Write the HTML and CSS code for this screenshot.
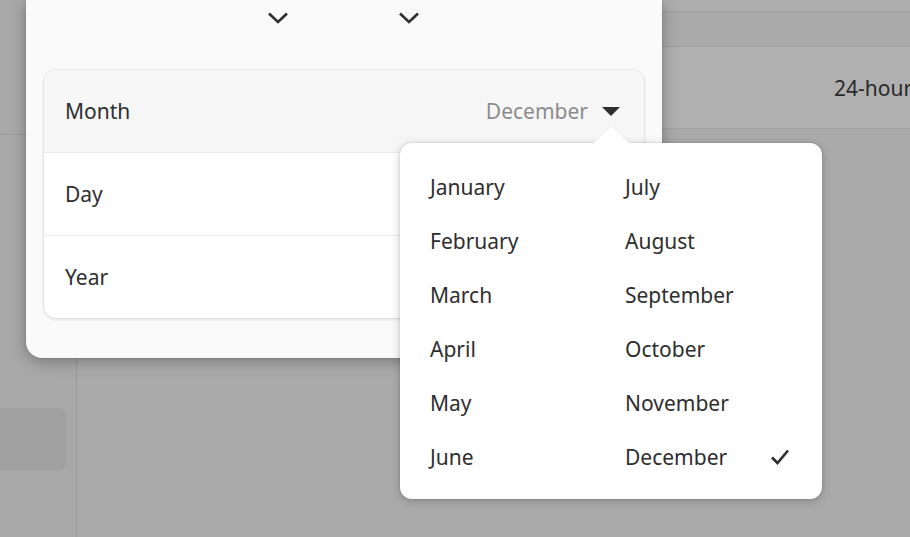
FILE: index.html
```html
<!DOCTYPE html>
<html lang="en">
<head>
<meta charset="utf-8">
<title>Date</title>
<link rel="stylesheet" href="styles.css">
</head>
<body>
<div class="screen">
  <aside class="sidebar">
    <div class="sb-header"></div>
    <div class="sb-item"></div>
  </aside>
  <main class="main">
    <div class="m-head"></div>
    <div class="m-gap"></div>
    <div class="m-row"><span class="m-label">24-hour</span></div>
  </main>

  <div class="dialog">
    <div class="spin-row">
      <button class="spin-btn" aria-label="Decrease">
        <svg width="22" height="14" viewBox="0 0 22 14"><polyline points="2,2.5 11,11 20,2.5" fill="none" stroke="#2e2e2e" stroke-width="2.6" stroke-linecap="butt" stroke-linejoin="miter"/></svg>
      </button>
      <button class="spin-btn" aria-label="Decrease">
        <svg width="22" height="14" viewBox="0 0 22 14"><polyline points="2,2.5 11,11 20,2.5" fill="none" stroke="#2e2e2e" stroke-width="2.6" stroke-linecap="butt" stroke-linejoin="miter"/></svg>
      </button>
    </div>
    <div class="boxed">
      <div class="row row-active">
        <span class="row-title">Month</span>
        <span class="row-value">December</span>
        <svg class="drop-arrow" width="18" height="9" viewBox="0 0 18 9"><polygon points="0,0 18,0 9,9" fill="#2e2e2e"/></svg>
      </div>
      <div class="row"><span class="row-title">Day</span></div>
      <div class="row"><span class="row-title">Year</span></div>
    </div>
  </div>

  <div class="popover">
    <div class="item">January</div>
    <div class="item">February</div>
    <div class="item">March</div>
    <div class="item">April</div>
    <div class="item">May</div>
    <div class="item">June</div>
    <div class="item">July</div>
    <div class="item">August</div>
    <div class="item">September</div>
    <div class="item">October</div>
    <div class="item">November</div>
    <div class="item">December
      <svg class="check" width="20" height="18" viewBox="0 0 20 18"><polyline points="2,9.5 7.5,15 18,2.5" fill="none" stroke="#2e2e2e" stroke-width="2.6" stroke-linejoin="miter"/></svg>
    </div>
  </div>
</div>
</body>
</html>
```

FILE: styles.css
```css
* { box-sizing: border-box; }
html, body { margin: 0; padding: 0; }
body {
  width: 910px;
  height: 537px;
  overflow: hidden;
  background: #ababab;
  font-family: "Noto Sans", "Open Sans", sans-serif;
  color: #2e2e2e;
}
.screen {
  position: relative;
  display: flex;
  width: 910px;
  height: 537px;
}

/* dimmed window behind */
.sidebar {
  width: 77px;
  flex: none;
  display: flex;
  flex-direction: column;
  background: #a8a8a8;
  border-right: 1px solid #9a9a9a;
}
.sb-header {
  height: 135px;
  border-bottom: 1px solid #9c9c9c;
}
.sb-item {
  margin: 273px 10px 0 -10px;
  height: 62px;
  border-radius: 8px;
  background: #a0a0a0;
}
.main {
  flex: 1;
  display: flex;
  flex-direction: column;
  background: #aaaaaa;
}
.m-head {
  height: 12px;
  background: #adadad;
  border-bottom: 1px solid #9f9f9f;
}
.m-gap {
  height: 35px;
  border-bottom: 1px solid #a1a1a1;
}
.m-row {
  height: 82px;
  display: flex;
  align-items: center;
  padding-left: 757px;
  background: #b0b0b0;
  border-bottom: 1px solid #a1a1a1;
  font-size: 21px;
  color: #2a2a2a;
  white-space: nowrap;
  overflow: hidden;
}

/* dialog */
.dialog {
  position: absolute;
  left: 26px;
  top: 0;
  width: 636px;
  height: 358px;
  padding: 0 18px;
  background: #fafafa;
  border-radius: 0 0 16px 16px;
  box-shadow: 0 0 0 1px rgba(0, 0, 0, 0.05), 0 3px 16px rgba(0, 0, 0, 0.3);
}
.spin-row {
  height: 36px;
  display: flex;
  gap: 87px;
  padding-left: 212px;
}
.spin-btn {
  width: 44px;
  height: 34px;
  border: none;
  background: transparent;
  padding: 0;
  display: flex;
  align-items: center;
  justify-content: center;
}
.spin-btn svg { display: block; margin-top: 2px; }

.boxed {
  margin-top: 34px;
  background: #ffffff;
  border-radius: 12px;
  overflow: hidden;
  box-shadow: 0 0 0 1px rgba(0, 0, 0, 0.04), 0 1px 3px 1px rgba(0, 0, 0, 0.08);
}
.row {
  height: 83px;
  display: flex;
  align-items: center;
  padding: 0 24px 0 21px;
  font-size: 21px;
  color: #2e2e2e;
  border-top: 1px solid #ebebeb;
}
.row:first-child {
  height: 82px;
  border-top: none;
}
.row-active { background: #f6f6f6; }
.row-title { flex: 1; }
.row-value {
  color: #8c8c8c;
  margin-right: 14px;
}
.drop-arrow { display: block; margin-top: 1px; }

/* popover */
.popover {
  position: absolute;
  left: 400px;
  top: 143px;
  width: 422px;
  height: 356px;
  padding: 17px 32px 15px 30px;
  background: #ffffff;
  border-radius: 12px;
  box-shadow: 0 0 0 1px rgba(0, 0, 0, 0.05), 0 2px 10px rgba(0, 0, 0, 0.22);
  display: grid;
  grid-template-columns: 195px 1fr;
  grid-template-rows: repeat(6, 54px);
  grid-auto-flow: column;
}
.popover::before {
  content: "";
  position: absolute;
  left: 198px;
  top: -13px;
  width: 26px;
  height: 26px;
  background: #ffffff;
  transform: rotate(45deg);
  border-top: 1px solid rgba(0, 0, 0, 0.07);
  border-left: 1px solid rgba(0, 0, 0, 0.07);
}
.item {
  position: relative;
  display: flex;
  align-items: center;
  justify-content: space-between;
  font-size: 21px;
  color: #2e2e2e;
}
.check { display: block; }
```
